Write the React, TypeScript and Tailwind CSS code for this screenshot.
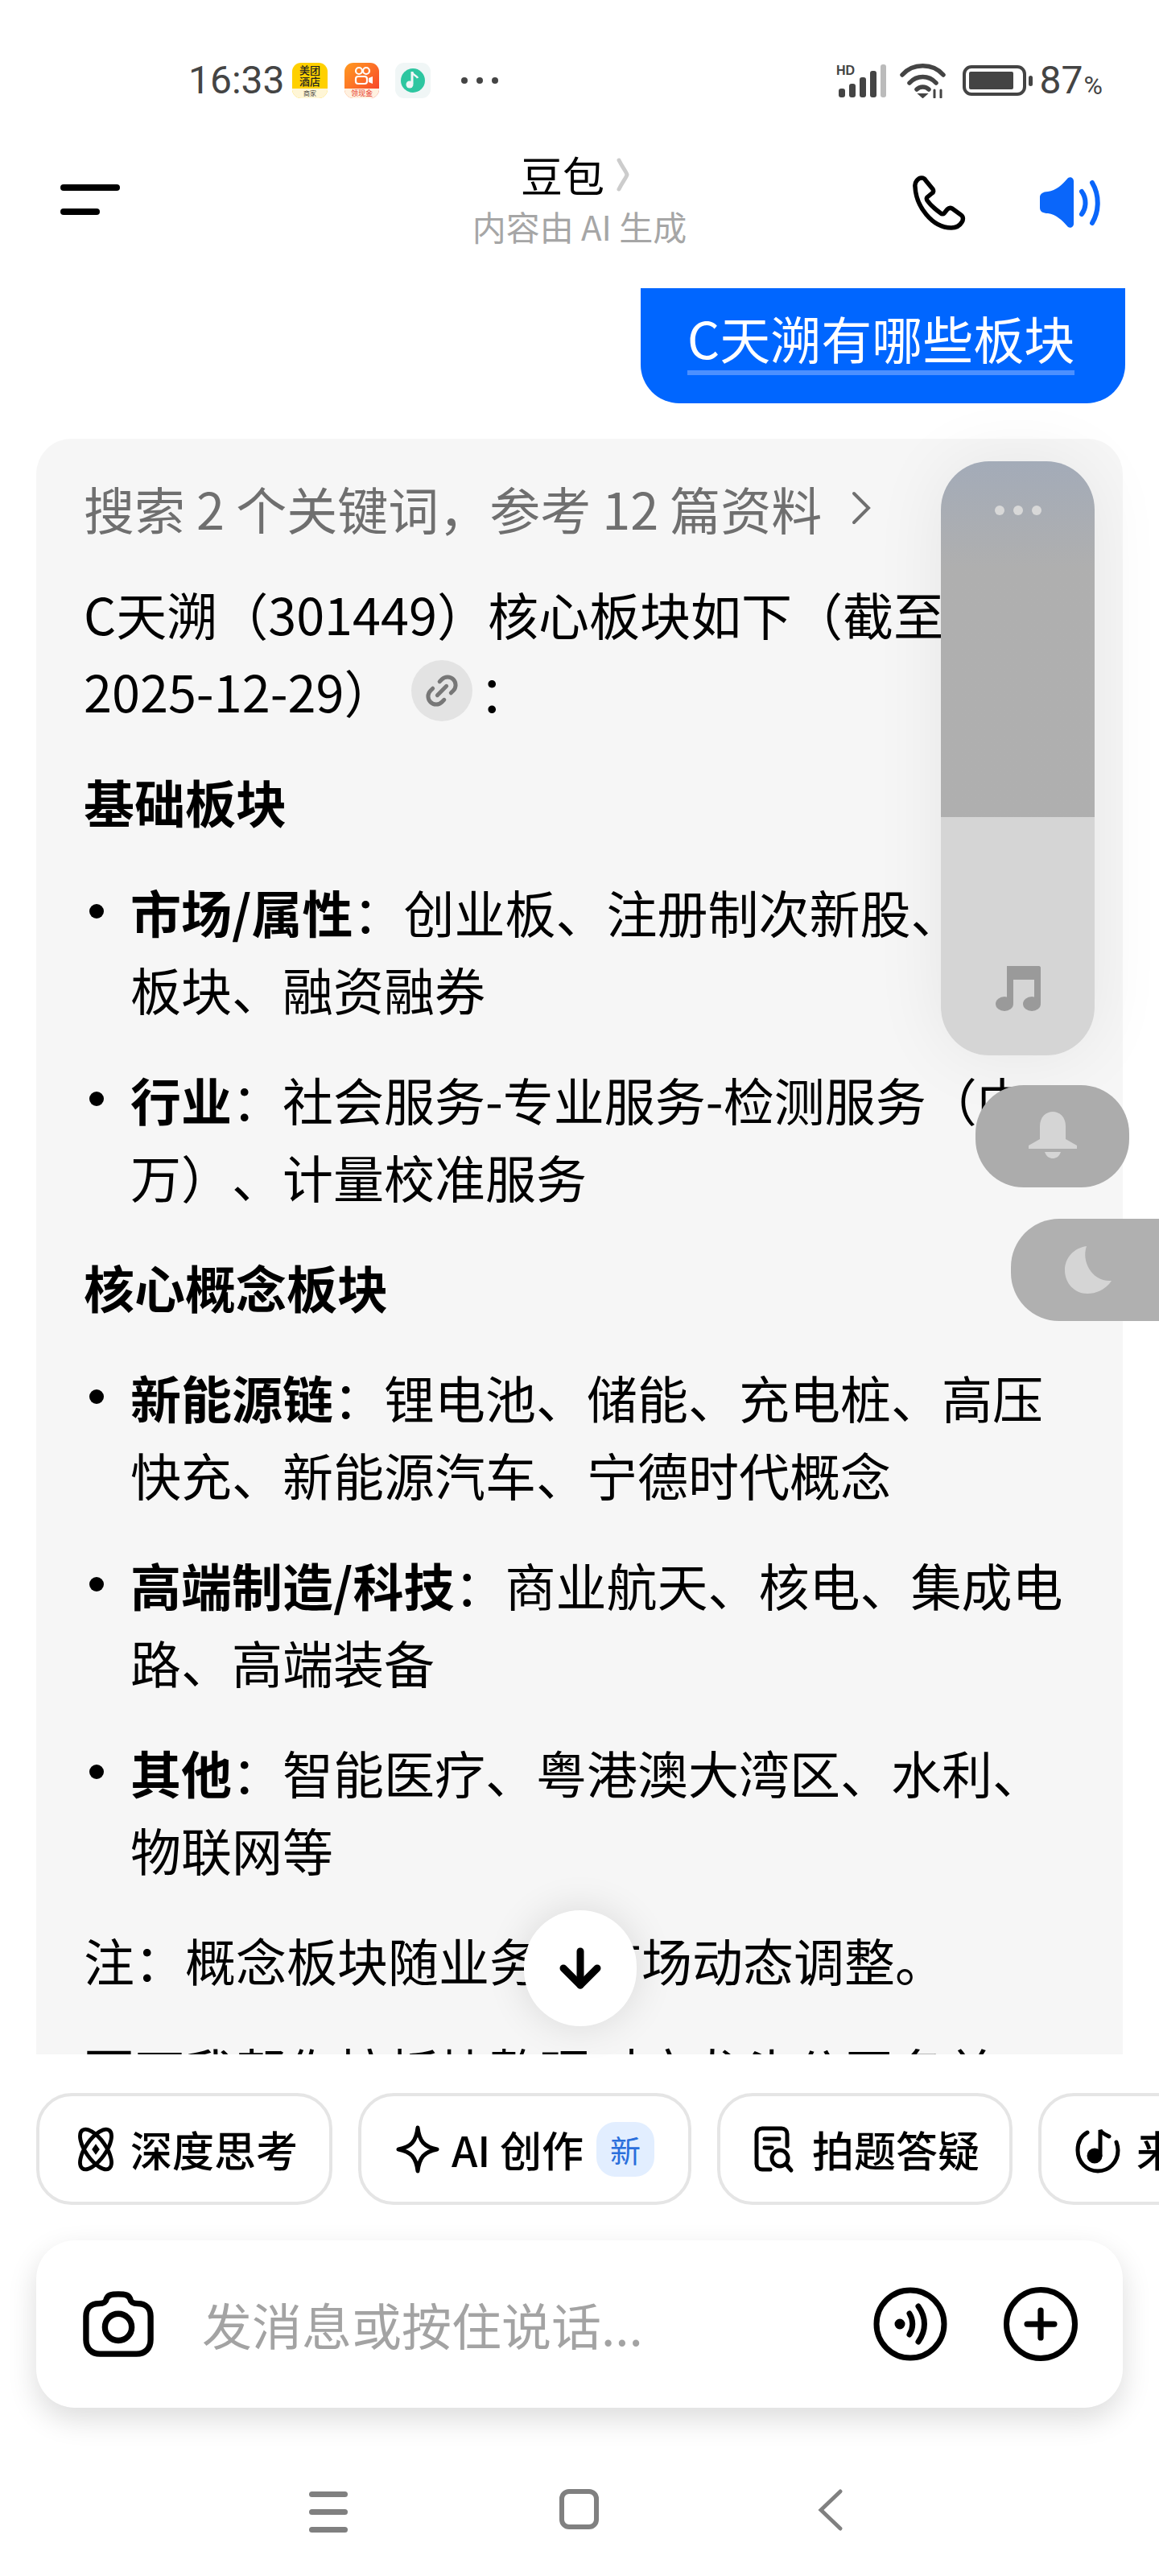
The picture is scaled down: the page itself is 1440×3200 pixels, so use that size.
import React from "react";
import { ArrowDown, Link2, Plus } from "lucide-react";

const font = "font-['Noto_Sans_CJK_SC','Noto_Sans',sans-serif]";

// full-width punctuation, kept as escapes so it stays full-width
const COLON = "\uFF1A";
const COMMA = "\uFF0C";
const LP = "\uFF08";
const RP = "\uFF09";

function StatusBar() {
  return (
    <div className="h-[170px] pt-[75px] pl-[234px] pr-[70px] flex items-start justify-between text-[#444]">
      <div className="flex items-center h-[50px]">
        <span className="text-[48px] font-['Roboto'] leading-none w-[122px]">16:33</span>
        <div className="ml-[7px] w-[44px] h-[44px] rounded-[11px] bg-[#ffd000] overflow-hidden flex flex-col items-center">
          <div className="h-[32px] text-[13px] leading-[14px] pt-[2px] w-[28px] text-center font-medium text-[#222]">美团酒店</div>
          <div className="h-[12px] w-full bg-[#fff6d6] text-[8px] leading-[12px] text-center text-[#444]">商家</div>
        </div>
        <div className="ml-[21px] w-[43px] h-[44px] rounded-[11px] bg-gradient-to-br from-[#ff9a1f] to-[#f5302a] overflow-hidden flex flex-col items-center">
          <svg viewBox="0 0 32 24" className="w-[32px] h-[32px]">
            <circle cx="12" cy="6" r="4" fill="none" stroke="#fff" strokeWidth="2.2" />
            <circle cx="21" cy="6" r="4" fill="none" stroke="#fff" strokeWidth="2.2" />
            <rect x="8" y="13" width="14" height="9" rx="3" fill="none" stroke="#fff" strokeWidth="2.2" />
            <path d="M24 15 L29 13 V22 L24 20 Z" fill="#fff" />
          </svg>
          <div className="h-[12px] w-full bg-[#fff1e0] text-[9px] leading-[12px] text-center text-[#e8392a]">领现金</div>
        </div>
        <div className="ml-[20px] w-[44px] h-[44px] rounded-[11px] bg-[#f0f6f6] flex items-center justify-center">
          <svg viewBox="0 0 32 32" className="w-[32px] h-[32px]">
            <circle cx="16" cy="16" r="15" fill="#2dc6a0" />
            <path d="M15 5 V20" stroke="#f0f6f6" strokeWidth="3" />
            <path d="M15 6 C17 10 21 10 22 13" stroke="#f0f6f6" strokeWidth="2.5" fill="none" />
            <circle cx="12" cy="21" r="4.5" fill="#f0f6f6" />
          </svg>
        </div>
        <div className="ml-[38px] flex gap-[11px]">
          <span className="w-[8px] h-[8px] rounded-full bg-[#444]" />
          <span className="w-[8px] h-[8px] rounded-full bg-[#444]" />
          <span className="w-[8px] h-[8px] rounded-full bg-[#444]" />
        </div>
      </div>
      <div className="flex items-center h-[50px]">
        <svg viewBox="0 0 64 44" className="w-[64px] h-[44px]">
          <text x="0" y="15" fontSize="16" fontWeight="700" fontFamily="Liberation Sans" fill="#444">HD</text>
          <rect x="3" y="32" width="8" height="11" rx="3" fill="#444" />
          <rect x="16" y="26" width="8" height="17" rx="3" fill="#444" />
          <rect x="29" y="18" width="8" height="25" rx="3" fill="#444" />
          <rect x="42" y="10" width="8" height="33" rx="3" fill="#444" />
          <rect x="55" y="2" width="7" height="41" rx="3" fill="#bbb" />
        </svg>
        <svg viewBox="0 0 60 44" className="ml-[15px] w-[60px] h-[44px]" fill="none" stroke="#444" strokeWidth="5.5" strokeLinecap="round">
          <path d="M3 15 C16 0 41 0 54 15" />
          <path d="M12 25 C21 15 36 15 45 25" />
          <path d="M21 33 C25 29 32 29 36 33" />
          <path d="M24 39 L28.5 43 L33 39 Z" fill="#444" strokeWidth="2" />
          <path d="M43 34 V43 M51 34 V43" strokeWidth="3" />
        </svg>
        <div className="ml-[18px] w-[79px] h-[38px] rounded-[11px] border-[4px] border-[#444] p-[4px]">
          <div className="w-[55px] h-full bg-[#444] rounded-[2px]" />
        </div>
        <div className="ml-[3px] w-[5px] h-[13px] rounded-full bg-[#444]" />
        <span className="ml-[9px] text-[48px] font-['Roboto'] leading-none">87</span>
        <span className="ml-[1px] text-[32px] font-['Roboto'] leading-none mt-[12px]">%</span>
      </div>
    </div>
  );
}

function Header() {
  return (
    <div className="h-[188px] pl-[75px] pr-[72px] flex items-center justify-between relative">
      <div className="flex flex-col gap-[22px] mt-[-32px]">
        <div className="w-[74px] h-[8px] rounded-full bg-black" />
        <div className="w-[49px] h-[8px] rounded-full bg-black" />
      </div>
      <div className="absolute left-0 right-0 top-[12px] flex flex-col items-center">
        <div className="flex items-center h-[70px] text-black text-[52px] leading-none pr-[10px]">
          豆包
          <svg viewBox="0 0 18 44" className="ml-[14px] w-[18px] h-[44px]" fill="none" stroke="#ccc" strokeWidth="5" strokeLinecap="round">
            <path d="M4 4 C9 14 13 18 14 22 C13 26 9 30 4 40" />
          </svg>
        </div>
        <div className="mt-[4px] text-[42px] leading-[50px] text-[#a6a6a6]">内容由 AI 生成</div>
      </div>
      <div className="flex items-center mt-[-24px]">
        <svg viewBox="0 0 68 68" className="w-[68px] h-[68px]" fill="none" stroke="#000" strokeWidth="5.5" strokeLinejoin="round">
          <path d="M5 14 C4 8 9 3 13 3 C15 3 17 4 18 6 L27 17 C28 19 28 21 26 22 L20 27 C19 28 19 29 20 31 C25 38 30 42 37 47 C38 48 40 48 41 47 L45 42 C47 40 49 40 51 41 L62 49 C65 51 65 55 63 58 C60 63 55 65 50 65 C26 65 6 38 5 14 Z" />
        </svg>
        <svg viewBox="0 0 76 64" className="ml-[92px] w-[76px] h-[64px]">
          <path d="M35 1 C38 -1 42 1 42 5 V58 C42 62 38 64 35 62 C28 54 20 46 10 45 C4 45 0 43 0 38 V25 C0 21 4 18 10 18 C20 17 28 9 35 1 Z" fill="#0a66fa" />
          <path d="M52 18 C58 26 58 38 52 46 M65 7 C74 22 74 42 65 57" fill="none" stroke="#0a66fa" strokeWidth="6" strokeLinecap="round" />
        </svg>
      </div>
    </div>
  );
}

function Para({ children }: { children: React.ReactNode }) {
  return <div className="leading-[96px] whitespace-nowrap">{children}</div>;
}

function Bullet({ label, first, second }: { label: string; first: string; second: string }) {
  return (
    <div className="relative pl-[58px] leading-[96px] whitespace-nowrap">
      <span className="absolute left-[7px] top-[39px] w-[18px] h-[18px] rounded-full bg-black" />
      <div>
        <span className="font-bold">{label}</span>
        {COLON}
        {first}
      </div>
      <div>{second}</div>
    </div>
  );
}

function Answer() {
  return (
    <div className="mt-[44px] mx-[45px] bg-[#f6f6f6] rounded-t-[44px] pl-[59px] pt-[38px] flex flex-col gap-[41px] text-[63px] text-black h-[2010px] overflow-hidden [text-spacing-trim:space-all]">
      <div className="flex flex-col">
        <div className="leading-[96px] text-[#6f6f6f] whitespace-nowrap flex items-center">
          {`搜索 2 个关键词${COMMA}参考 12 篇资料`}
          <svg viewBox="0 0 24 44" className="ml-[36px] w-[26px] h-[44px]" fill="none" stroke="#6f6f6f" strokeWidth="4" strokeLinecap="round">
            <path d="M3 4 L21 22 L3 40" />
          </svg>
        </div>
        <div className="mt-[35px] leading-[96px] whitespace-nowrap">{`C天溯${LP}301449${RP}核心板块如下${LP}截至`}</div>
        <div className="leading-[96px] whitespace-nowrap flex items-center">
          {`2025-12-29${RP}`}
          <span className="ml-[21px] mr-[8px] w-[76px] h-[76px] rounded-full bg-[#e3e3e3] flex items-center justify-center">
            <Link2 className="w-[48px] h-[48px] text-[#777] -rotate-45" strokeWidth={2.5} />
          </span>
          {COLON}
        </div>
      </div>
      <Para><span className="font-bold">基础板块</span></Para>
      <Bullet label="市场/属性" first="创业板、注册制次新股、深股" second="板块、融资融券" />
      <Bullet label="行业" first={`社会服务-专业服务-检测服务${LP}中`} second={`万${RP}、计量校准服务`} />
      <Para><span className="font-bold">核心概念板块</span></Para>
      <Bullet label="新能源链" first="锂电池、储能、充电桩、高压" second="快充、新能源汽车、宁德时代概念" />
      <Bullet label="高端制造/科技" first="商业航天、核电、集成电" second="路、高端装备" />
      <Bullet label="其他" first="智能医疗、粤港澳大湾区、水利、" second="物联网等" />
      <Para>{`注${COLON}概念板块随业务和市场动态调整。`}</Para>
      <Para>要不我帮你按板块整理对应龙头公司名单</Para>
    </div>
  );
}

function Chip({ icon, children, className }: { icon: React.ReactNode; children: React.ReactNode; className: string }) {
  return (
    <div className={`shrink-0 h-[139px] rounded-[44px] border-[4px] border-[#e5e5e5] bg-white flex items-center text-[52px] text-black font-medium whitespace-nowrap ${className}`}>
      {icon}
      {children}
    </div>
  );
}

function Chips() {
  return (
    <div className="mt-[48px] pl-[45px] flex gap-[32px] overflow-hidden">
      <Chip
        className="w-[368px] pl-[43px]"
        icon={
          <svg viewBox="0 0 56 56" className="w-[54px] h-[56px] mr-[16px]" fill="none" stroke="#000" strokeWidth="5">
            <ellipse cx="28" cy="28" rx="13" ry="30" transform="rotate(-35 28 28)" />
            <ellipse cx="28" cy="28" rx="13" ry="30" transform="rotate(35 28 28)" />
            <path d="M28 21 L33 28 L28 35 L23 28 Z" fill="#000" stroke="none" />
          </svg>
        }
      >
        深度思考
      </Chip>
      <Chip
        className="w-[414px] pl-[42px]"
        icon={
          <svg viewBox="0 0 56 60" className="w-[56px] h-[60px] mr-[14px]" fill="none" stroke="#000" strokeWidth="5" strokeLinejoin="round">
            <path d="M28 3 C30 20 36 27 52 30 C36 33 30 40 28 57 C26 40 20 33 4 30 C20 27 26 20 28 3 Z" />
          </svg>
        }
      >
        AI 创作
        <span className="ml-[16px] w-[72px] h-[68px] rounded-[24px] bg-[#e2eeff] text-[#2a6fdc] text-[38px] font-normal flex items-center justify-center">新</span>
      </Chip>
      <Chip
        className="w-[367px] pl-[42px]"
        icon={
          <svg viewBox="0 0 50 60" className="w-[50px] h-[60px] mr-[22px]" fill="none" stroke="#000" strokeWidth="5" strokeLinecap="round">
            <path d="M20 55 H10 C6 55 3 52 3 48 V11 C3 7 6 4 10 4 H34 C38 4 41 7 41 11 V26" />
            <path d="M13 17 H31 M13 28 H22" />
            <circle cx="32" cy="41" r="10" />
            <path d="M40 49 L46 56" />
          </svg>
        }
      >
        拍题答疑
      </Chip>
      <Chip
        className="w-[370px] pl-[42px]"
        icon={
          <svg viewBox="0 0 56 60" className="w-[56px] h-[60px] mr-[20px]" fill="none" stroke="#000" strokeWidth="5" strokeLinecap="round">
            <path d="M15 9 C6 14 3 22 3 31 C3 46 14 57 28 57 C42 57 53 46 53 31 C53 27 52 24 51 21" />
            <path d="M31 38 V6 C33 10 38 12 42 14" />
            <circle cx="24" cy="38" r="7" fill="#000" />
          </svg>
        }
      >
        来
      </Chip>
    </div>
  );
}

function InputBar() {
  return (
    <div className="mt-[44px] mx-[45px] h-[208px] rounded-[48px] bg-white shadow-[0_14px_36px_rgba(0,0,0,0.14)] flex items-center pl-[58px] pr-[56px]">
      <svg viewBox="0 0 90 84" className="w-[88px] h-[84px]" fill="none" stroke="#000" strokeWidth="7.5" strokeLinejoin="round">
        <path d="M30 10 C32 5 36 4 45 4 C54 4 58 5 60 10 C61 15 64 16 70 16 C80 16 86 22 86 32 V62 C86 73 79 80 68 80 H22 C11 80 4 73 4 62 V32 C4 22 10 16 20 16 C26 16 29 15 30 10 Z" />
        <circle cx="45" cy="46" r="17" />
      </svg>
      <span className="ml-[60px] text-[62px] text-[#a3a3a3] leading-none flex-1">发消息或按住说话...</span>
      <svg viewBox="0 0 92 92" className="w-[92px] h-[92px]" fill="none" stroke="#000" strokeWidth="7" strokeLinecap="round">
        <circle cx="46" cy="46" r="42" />
        <circle cx="33" cy="46" r="3" fill="#000" />
        <path d="M45 33 C50 41 50 51 45 59 M56 24 C66 38 66 54 56 68" />
      </svg>
      <div className="ml-[70px] w-[92px] h-[92px] rounded-full border-[7px] border-black flex items-center justify-center">
        <Plus className="w-[58px] h-[58px] text-black" strokeWidth={3} />
      </div>
    </div>
  );
}

function NavBar() {
  return (
    <div className="mt-[101px] h-[60px] relative">
      <div className="absolute left-[384px] top-[3px] w-[48px] flex flex-col gap-[15px]">
        <div className="h-[7px] rounded-full bg-[#808080]" />
        <div className="h-[7px] rounded-full bg-[#808080]" />
        <div className="h-[7px] rounded-full bg-[#808080]" />
      </div>
      <div className="absolute left-[695px] top-0 w-[49px] h-[50px] rounded-[12px] border-[6px] border-[#808080]" />
      <svg viewBox="0 0 32 54" className="absolute left-[1016px] top-0 w-[31px] h-[52px]" fill="none" stroke="#808080" strokeWidth="5" strokeLinecap="round">
        <path d="M29 3 L4 27 L29 51" />
      </svg>
    </div>
  );
}

export default function App() {
  return (
    <div className={`relative w-[1440px] h-[3200px] bg-white overflow-hidden ${font}`}>
      <StatusBar />
      <Header />
      <div className="h-[2194px] overflow-hidden">
        <div className="ml-[796px] w-[602px] h-[143px] bg-[#0066ff] rounded-b-[48px] pl-[58px] pt-[14px] text-white text-[63px]">
          <span className="inline-block h-[89px] leading-[83px] border-b-[6px] border-[#4c90ff]">C天溯有哪些板块</span>
        </div>
        <Answer />
      </div>
      <Chips />
      <InputBar />
      <NavBar />

      {/* volume panel, floats over the reply */}
      <div className="absolute left-[1169px] top-[573px] w-[191px] h-[738px] rounded-[60px] overflow-hidden shadow-[0_0_90px_rgba(0,0,0,0.07)] flex flex-col">
        <div className="h-[442px] bg-gradient-to-b from-[#a3abb8] to-[#afafaf] to-30% pt-[55px] flex justify-center gap-[11px]">
          <span className="w-[12px] h-[12px] rounded-full bg-[#d8d8d8]" />
          <span className="w-[12px] h-[12px] rounded-full bg-[#d8d8d8]" />
          <span className="w-[12px] h-[12px] rounded-full bg-[#d8d8d8]" />
        </div>
        <div className="flex-1 bg-[#d5d5d5] pt-[185px] flex justify-center">
          <svg viewBox="0 0 56 56" className="w-[56px] h-[56px]" fill="#9a9a9a">
            <path d="M14 0 H54 C55 0 56 1 56 2 V46 H48 V17 H22 V46 H14 Z" />
            <ellipse cx="11" cy="47" rx="11" ry="9" />
            <ellipse cx="45" cy="47" rx="11" ry="9" />
          </svg>
        </div>
      </div>
      <div className="absolute left-[1212px] top-[1348px] w-[191px] h-[127px] rounded-[60px] bg-[#acacac] flex items-center justify-center">
        <svg viewBox="0 0 60 62" className="w-[60px] h-[62px]" fill="#d5d5d5">
          <path d="M14 18 C14 6 22 0 30 0 C38 0 46 6 46 18 V34 L60 42 V46 H0 V42 L14 34 Z" />
          <path d="M20 50 H40 C38 56 34 58 30 58 C26 58 22 56 20 50 Z" />
        </svg>
      </div>
      <div className="absolute left-[1256px] top-[1514px] w-[191px] h-[127px] rounded-l-[60px] bg-[#b0b0b0] flex items-center justify-center">
        <svg viewBox="0 0 58 59" className="w-[58px] h-[59px]" fill="#d5d5d5">
          <path d="M27 0 C20 20 35 45 58 43 C50 55 38 59 28 59 C12 59 0 46 0 30 C0 14 12 2 27 0 Z" />
        </svg>
      </div>

      {/* scroll to bottom */}
      <div className="absolute left-[651px] top-[2373px] w-[140px] h-[144px] rounded-full bg-white shadow-[0_0_50px_rgba(0,0,0,0.12)] flex items-center justify-center">
        <ArrowDown className="w-[72px] h-[72px] text-black" strokeWidth={3} />
      </div>
    </div>
  );
}
